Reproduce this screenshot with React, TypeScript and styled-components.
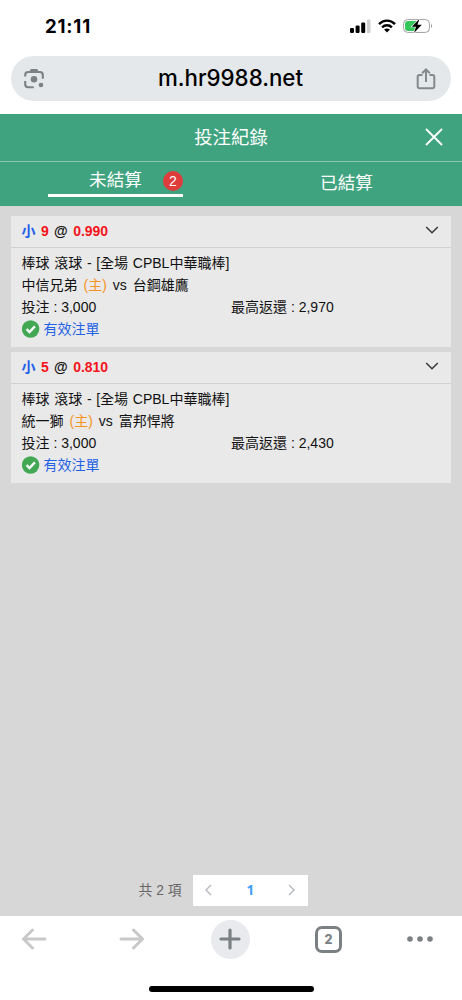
import React from "react";
import styled, { createGlobalStyle } from "styled-components";

const GlobalStyle = createGlobalStyle`
  * { box-sizing: border-box; }
  body {
    margin: 0;
    background: #fff;
    font-family: "Liberation Sans", "Noto Sans CJK TC", sans-serif;
    color: #111;
  }
  svg { display: block; }
`;

const Screen = styled.div`
  display: flex;
  flex-direction: column;
  width: 462px;
  height: 1000px;
  overflow: hidden;
`;

const StatusBar = styled.div`
  display: flex;
  justify-content: space-between;
  align-items: center;
  height: 56px;
  padding: 0 29px 4px 45px;
`;

const Clock = styled.span`
  font: 700 18.6px/22px Inter, sans-serif;
  color: #000;
  letter-spacing: 0.8px;
`;

const StatusIcons = styled.div`
  display: flex;
  align-items: center;
  gap: 7px;
`;

const AddressBar = styled.div`
  display: flex;
  align-items: center;
  justify-content: space-between;
  height: 45px;
  margin: 0 11px 12.5px;
  padding: 0 15px 0 12px;
  border-radius: 23px;
  background: #e5e8ea;
`;

const Host = styled.span`
  padding-bottom: 2px;
  font: 500 22.3px/28px Inter, sans-serif;
  color: #000;
`;

const TitleBar = styled.header`
  display: grid;
  grid-template-columns: 1fr auto 1fr;
  align-items: center;
  height: 48.5px;
  padding: 0 19px;
  background: #40a380;
  border-bottom: 1.5px solid #8cc8b3;
  color: #fff;
`;

const Title = styled.h1`
  grid-column: 2;
  margin: 0;
  padding-top: 2px;
  font-size: 18.4px;
  font-weight: 400;
  line-height: 26px;
`;

const CloseButton = styled.button`
  justify-self: end;
  padding: 0;
  border: 0;
  background: none;
`;

const Tabs = styled.nav`
  display: grid;
  grid-template-columns: 1fr 1fr;
  height: 43.5px;
  flex: none;
  background: #40a380;
  color: #fff;
  font-size: 17.6px;
`;

const Tab = styled.div<{ $active?: boolean }>`
  display: flex;
  justify-content: center;
  align-items: center;
  position: relative;
  width: 135px;
  height: ${(p) => (p.$active ? 35 : 39)}px;
  justify-self: center;
  border-bottom: ${(p) => (p.$active ? "3px solid #fff" : "0")};
`;

const Badge = styled.span`
  position: absolute;
  right: 0;
  top: 8.5px;
  width: 20px;
  height: 20px;
  border-radius: 50%;
  background: #df3c3c;
  font-size: 14px;
  line-height: 20px;
  text-align: center;
`;

const Content = styled.main`
  display: flex;
  flex-direction: column;
  flex: 1;
  gap: 5px;
  padding: 10.5px 11px 10px;
  background: #d7d7d7;
`;

const Card = styled.article`
  height: 131px;
  background: #e9e9e9;
  font-size: 14px;
`;

const CardHeader = styled.div`
  display: flex;
  align-items: center;
  justify-content: space-between;
  height: 32px;
  padding: 0 12px 3px 10.5px;
  border-bottom: 1.5px solid #d2d2d2;
`;

const Pick = styled.div`
  display: flex;
  gap: 5.4px;
  padding-top: 2px;
  font-weight: 700;
  line-height: 22px;
`;

const Side = styled.span`
  color: #1f5fe8;
`;

const Odds = styled.span`
  color: #f4141b;
`;

const CardBody = styled.div`
  padding: 4px 10.5px 0;
`;

const Line = styled.div`
  display: flex;
  height: 21.8px;
  line-height: 22px;
  white-space: pre;
`;

const League = styled(Line)`
  word-spacing: 0.8px;
`;

const Teams = styled(Line)`
  gap: 6px;
`;

const Home = styled.span`
  color: #f7941e;
`;

const Half = styled.span`
  width: 209.5px;
`;

const Status = styled(Line)`
  align-items: center;
  gap: 4px;
  padding-top: 1px;
  color: #1f62e4;
`;

const Pagination = styled.footer`
  display: flex;
  align-items: center;
  gap: 12px;
  margin: auto 0 0 127.5px;
`;

const Total = styled.span`
  padding-bottom: 2px;
  color: #666;
  font-size: 13.8px;
`;

const Pager = styled.div`
  display: flex;
  align-items: center;
  justify-content: space-between;
  width: 115px;
  height: 30.5px;
  padding: 0 13px 0 12px;
  background: #fff;
`;

const PageNumber = styled.span`
  color: #409eff;
  font: 700 13.5px/20px "Open Sans", sans-serif;
`;

const BottomBar = styled.div`
  display: flex;
  flex-direction: column;
  justify-content: space-between;
  align-items: center;
  height: 84.5px;
  padding: 4px 0 8.5px;
  background: #fff;
`;

const Toolbar = styled.div`
  display: grid;
  grid-template-columns: repeat(4, 40px) 26px;
  column-gap: 58.2px;
  align-items: center;
  justify-items: center;
  width: 100%;
  height: 39px;
  padding-left: 14px;
`;

const NewTab = styled.div`
  display: grid;
  place-items: center;
  width: 39px;
  height: 39px;
  border-radius: 50%;
  background: #e9eaee;
`;

const TabCount = styled.div`
  width: 27px;
  height: 27px;
  border: 3px solid #7b8083;
  border-radius: 7px;
  color: #7b8083;
  font: 800 12.5px/21px Inter, sans-serif;
  text-align: center;
`;

const HomeIndicator = styled.div`
  width: 165px;
  height: 5.5px;
  border-radius: 3px;
  background: #000;
`;

const bets = [
  { line: "9", odds: "0.990", home: "中信兄弟", away: "台鋼雄鷹", stake: "3,000", payout: "2,970" },
  { line: "5", odds: "0.810", home: "統一獅", away: "富邦悍將", stake: "3,000", payout: "2,430" },
];

const Signal = () => (
  <svg width="21" height="14" viewBox="0 0 21 14">
    <rect x="0" y="9" width="4" height="5" rx="1.2" />
    <rect x="5.6" y="6.5" width="4" height="7.5" rx="1.2" />
    <rect x="11.2" y="3.5" width="4" height="10.5" rx="1.2" />
    <rect x="16.9" y="0.5" width="3.6" height="13.5" rx="1.2" fill="#cfcfcf" />
  </svg>
);

const Wifi = () => (
  <svg width="18" height="14" viewBox="0 0 18 14" fill="none" stroke="#000" strokeWidth="2.4">
    <path d="M1 5.1C5.5.4 12.5.4 17 5.1M4.1 8.4c2.8-2.8 7-2.8 9.8 0" />
    <path d="M9 13.5 6.1 10.6c1.7-1.5 4.1-1.5 5.8 0z" fill="#000" stroke="none" />
  </svg>
);

const Battery = () => (
  <svg width="30" height="16" viewBox="0 0 30 16">
    <rect x=".6" y="1.6" width="25.8" height="12.8" rx="4" fill="#fff" stroke="#a0a0a0" />
    <path d="M5 3h8.5v10H5a3 3 0 0 1-3-3V6a3 3 0 0 1 3-3z" fill="#35c759" />
    <path d="M28 6v4c1.6-.5 1.6-3.5 0-4z" fill="#a0a0a0" />
    <path d="M16.5.8 8.8 8.7h4.2L11 15l7.8-8.2h-4.3z" fill="#000" stroke="#fff" strokeWidth="1.2" paintOrder="stroke" />
  </svg>
);

const Lens = () => (
  <svg width="22" height="22" viewBox="0 0 22 22" fill="none" stroke="#7c8184" strokeWidth="2.1">
    <path d="M2.2 8.6V7a3 3 0 0 1 3-3h11.6a3 3 0 0 1 3 3v3.8M2.2 13v3.2a3 3 0 0 0 3 3H10.8" />
    <path d="M6 4.2 7.8 1h6.4L16 4.2z" fill="#7c8184" stroke="none" />
    <circle cx="11" cy="11.2" r="3.3" fill="#7c8184" stroke="none" />
    <circle cx="18" cy="17" r="2.3" fill="#7c8184" stroke="none" />
  </svg>
);

const Share = () => (
  <svg width="20" height="22" viewBox="0 0 20 22" fill="none" stroke="#84898c" strokeWidth="2">
    <path d="M6.5 7H3.5A1.8 1.8 0 0 0 1.7 8.8v9.7a1.8 1.8 0 0 0 1.8 1.8h13a1.8 1.8 0 0 0 1.8-1.8V8.8A1.8 1.8 0 0 0 16.5 7h-3M10 14V2.2M6.2 5.3 10 1.5l3.8 3.8" />
  </svg>
);

const Check = () => (
  <svg width="18" height="18" viewBox="0 0 18 18">
    <circle cx="8.6" cy="9" r="8.7" fill="#43a853" />
    <path d="m4.6 9.1 2.9 2.9 5.4-5.6" fill="none" stroke="#fff" strokeWidth="2.3" />
  </svg>
);

const Chevron = ({ d, color, w, h }: { d: string; color: string; w: number; h: number }) => (
  <svg width={w} height={h} viewBox={`0 0 ${w} ${h}`} fill="none" stroke={color} strokeWidth="1.4">
    <path d={d} />
  </svg>
);

const Arrow = ({ back }: { back?: boolean }) => (
  <svg width="26" height="22" viewBox="0 0 26 22" fill="none" stroke="#c9c9c9" strokeWidth="3" strokeLinecap="round" strokeLinejoin="round">
    <path d={back ? "M24 11H2.5M11.5 2l-9 9 9 9" : "M2 11h21.5M14.5 2l9 9-9 9"} />
  </svg>
);

export default function App() {
  return (
    <Screen>
      <GlobalStyle />
      <StatusBar>
        <Clock>21:11</Clock>
        <StatusIcons>
          <Signal />
          <Wifi />
          <Battery />
        </StatusIcons>
      </StatusBar>
      <AddressBar>
        <Lens />
        <Host>m.hr9988.net</Host>
        <Share />
      </AddressBar>
      <TitleBar>
        <Title>投注紀錄</Title>
        <CloseButton aria-label="close">
          <svg width="18" height="18" viewBox="0 0 18 18" stroke="#fff" strokeWidth="1.8">
            <path d="m1 1 16 16M17 1 1 17" />
          </svg>
        </CloseButton>
      </TitleBar>
      <Tabs>
        <Tab $active>
          未結算
          <Badge>2</Badge>
        </Tab>
        <Tab>已結算</Tab>
      </Tabs>
      <Content>
        {bets.map((bet) => (
          <Card key={bet.odds}>
            <CardHeader>
              <Pick>
                <Side>小</Side>
                <Odds>{bet.line}</Odds>
                <span>@</span>
                <Odds>{bet.odds}</Odds>
              </Pick>
              <Chevron w={14} h={8} color="#333" d="m1.2 1 5.8 5.7L12.8 1" />
            </CardHeader>
            <CardBody>
              <League>棒球 滾球 - [全場 CPBL中華職棒]</League>
              <Teams>
                <span>{bet.home}</span>
                <Home>(主)</Home>
                <span>vs</span>
                <span>{bet.away}</span>
              </Teams>
              <Line>
                <Half>投注 : {bet.stake}</Half>
                <span>最高返還 : {bet.payout}</span>
              </Line>
              <Status>
                <Check />
                <span>有效注單</span>
              </Status>
            </CardBody>
          </Card>
        ))}
        <Pagination>
          <Total>共 2 項</Total>
          <Pager>
            <Chevron w={7} h={12} color="#b4b8bf" d="M6 1 1 6l5 5" />
            <PageNumber>1</PageNumber>
            <Chevron w={7} h={12} color="#b4b8bf" d="m1 1 5 5-5 5" />
          </Pager>
        </Pagination>
      </Content>
      <BottomBar>
        <Toolbar>
          <Arrow back />
          <Arrow />
          <NewTab>
            <svg width="22" height="22" viewBox="0 0 22 22" stroke="#7b8083" strokeWidth="3.2" strokeLinecap="round">
              <path d="M11 2v18M2 11h18" />
            </svg>
          </NewTab>
          <TabCount>2</TabCount>
          <svg width="26" height="6" viewBox="0 0 26 6" fill="#7b8083">
            <circle cx="3" cy="3" r="2.8" />
            <circle cx="13" cy="3" r="2.8" />
            <circle cx="23" cy="3" r="2.8" />
          </svg>
        </Toolbar>
        <HomeIndicator />
      </BottomBar>
    </Screen>
  );
}
